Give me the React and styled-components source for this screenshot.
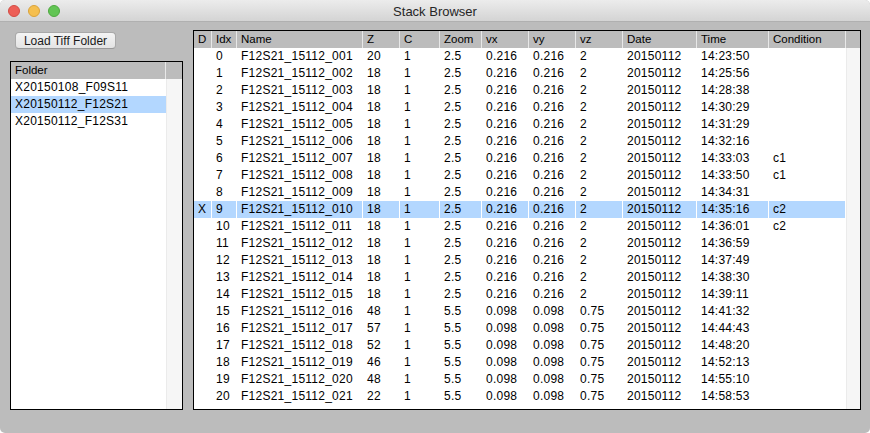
import React from 'react';
import styled, { createGlobalStyle } from 'styled-components';

const COLS = [18, 25, 126, 37, 40, 42, 47, 47, 47, 74, 72, 77];
const HEADERS = ['D', 'Idx', 'Name', 'Z', 'C', 'Zoom', 'vx', 'vy', 'vz', 'Date', 'Time', 'Condition'];

const times = [
  '14:23:50', '14:25:56', '14:28:38', '14:30:29', '14:31:29', '14:32:16', '14:33:03',
  '14:33:50', '14:34:31', '14:35:16', '14:36:01', '14:36:59', '14:37:49', '14:38:30',
  '14:39:11', '14:41:32', '14:44:43', '14:48:20', '14:52:13', '14:55:10', '14:58:53',
];
const zs = [20, 18, 18, 18, 18, 18, 18, 18, 18, 18, 18, 18, 18, 18, 18, 48, 57, 52, 46, 48, 22];
const conditions = { 6: 'c1', 7: 'c1', 9: 'c2', 10: 'c2' };

const stacks = times.map((time, i) => {
  const big = i >= 15;
  return {
    d: i === 9 ? 'X' : '',
    idx: i,
    name: `F12S21_15112_${String(i + 1).padStart(3, '0')}`,
    z: zs[i],
    c: 1,
    zoom: big ? '5.5' : '2.5',
    vx: big ? '0.098' : '0.216',
    vy: big ? '0.098' : '0.216',
    vz: big ? '0.75' : '2',
    date: '20150112',
    time,
    condition: conditions[i] || '',
  };
});

const folders = ['X20150108_F09S11', 'X20150112_F12S21', 'X20150112_F12S31'];

const GlobalStyle = createGlobalStyle`
  html, body { margin: 0; padding: 0; background: #ffffff; }
  body { font-family: "Liberation Sans", Arial, sans-serif; }
`;

const Window = styled.div`
  width: 870px;
  height: 433px;
  display: flex;
  flex-direction: column;
  background: #bcbcbc;
  border-radius: 5px;
  overflow: hidden;
`;

const TitleBar = styled.div`
  height: 22px;
  flex: none;
  display: grid;
  grid-template-columns: 1fr auto 1fr;
  align-items: center;
  background: linear-gradient(#ececec, #d4d4d4);
  border-bottom: 1px solid #b0b0b0;
  box-sizing: border-box;
`;

const Lights = styled.div`
  display: flex;
  gap: 8px;
  padding-left: 8px;
`;

const Light = styled.span`
  width: 12px;
  height: 12px;
  border-radius: 50%;
  box-sizing: border-box;
  background: ${(p) => p.$color};
  border: 1px solid ${(p) => p.$edge};
`;

const Title = styled.div`
  font-size: 13px;
  color: #262626;
  padding-top: 1px;
`;

const Content = styled.div`
  flex: 1;
  display: flex;
  gap: 10px;
  padding: 8px 9px 23px 10px;
  min-height: 0;
`;

const Sidebar = styled.div`
  width: 173px;
  display: flex;
  flex-direction: column;
`;

const Button = styled.button`
  margin: 2px 0 0 5px;
  width: 101px;
  height: 17px;
  padding: 0;
  font-family: "Liberation Sans", Arial, sans-serif;
  font-size: 12px;
  color: #1a1a1a;
  background: linear-gradient(#f4f4f4, #e4e4e4);
  border: 1px solid #a9a9a9;
  border-bottom-color: #999999;
  border-radius: 4px;
`;

const Panel = styled.div`
  flex: 1;
  margin-top: ${(p) => p.$top || 0}px;
  display: flex;
  flex-direction: column;
  background: #ffffff;
  border: 1px solid #000000;
  min-height: 0;
`;

const HeadRow = styled.div`
  height: 17px;
  flex: none;
  display: grid;
  grid-template-columns: ${(p) => p.$cols};
  background: #bcbcbc;
`;

const HeadCell = styled.div`
  font-size: 11.5px;
  line-height: 17px;
  padding-left: 4px;
  color: #000;
  border-right: 1px solid #e8e8e8;
  white-space: nowrap;
  overflow: hidden;
`;

const Body = styled.div`
  flex: 1;
  display: flex;
  min-height: 0;
`;

const Rows = styled.div`
  width: ${(p) => p.$width}px;
  flex: none;
`;

const Track = styled.div`
  flex: 1;
  background: #f6f6f6;
  border-left: 1px solid #ebebeb;
`;

const Row = styled.div`
  height: 17px;
  display: grid;
  grid-template-columns: ${(p) => p.$cols};
  background: ${(p) => (p.$selected ? '#b3d7ff' : '#ffffff')};
`;

const Cell = styled.div`
  font-size: 12px;
  letter-spacing: 0.25px;
  line-height: 17px;
  padding-left: 4px;
  color: #000;
  border-right: 1px solid #ffffff;
  white-space: nowrap;
  overflow: hidden;
`;

const FolderItem = styled.div`
  height: 17px;
  font-size: 12px;
  letter-spacing: 0.25px;
  line-height: 17px;
  padding-left: 4px;
  color: #000;
  background: ${(p) => (p.$selected ? '#b3d7ff' : 'transparent')};
`;

const colTemplate = COLS.map((w) => `${w}px`).join(' ');
const rowsWidth = COLS.reduce((a, b) => a + b, 0);

export default function App() {
  const keys = ['d', 'idx', 'name', 'z', 'c', 'zoom', 'vx', 'vy', 'vz', 'date', 'time', 'condition'];
  return (
    <>
      <GlobalStyle />
      <Window>
        <TitleBar>
          <Lights>
            <Light $color="#ed5f57" $edge="#d24c44" />
            <Light $color="#f5bf4f" $edge="#d9a23a" />
            <Light $color="#62c554" $edge="#4ea83f" />
          </Lights>
          <Title>Stack Browser</Title>
          <div />
        </TitleBar>
        <Content>
          <Sidebar>
            <Button>Load Tiff Folder</Button>
            <Panel $top={12}>
              <HeadRow $cols="155px 1fr">
                <HeadCell>Folder</HeadCell>
                <div />
              </HeadRow>
              <Body>
                <Rows $width={155}>
                  {folders.map((f, i) => (
                    <FolderItem key={f} $selected={i === 1}>
                      {f}
                    </FolderItem>
                  ))}
                </Rows>
                <Track />
              </Body>
            </Panel>
          </Sidebar>
          <Panel>
            <HeadRow $cols={`${colTemplate} 1fr`}>
              {HEADERS.map((h) => (
                <HeadCell key={h}>{h}</HeadCell>
              ))}
              <div />
            </HeadRow>
            <Body>
              <Rows $width={rowsWidth}>
                {stacks.map((s) => (
                  <Row key={s.idx} $cols={colTemplate} $selected={s.idx === 9}>
                    {keys.map((k) => (
                      <Cell key={k}>{s[k]}</Cell>
                    ))}
                  </Row>
                ))}
              </Rows>
              <Track />
            </Body>
          </Panel>
        </Content>
      </Window>
    </>
  );
}
